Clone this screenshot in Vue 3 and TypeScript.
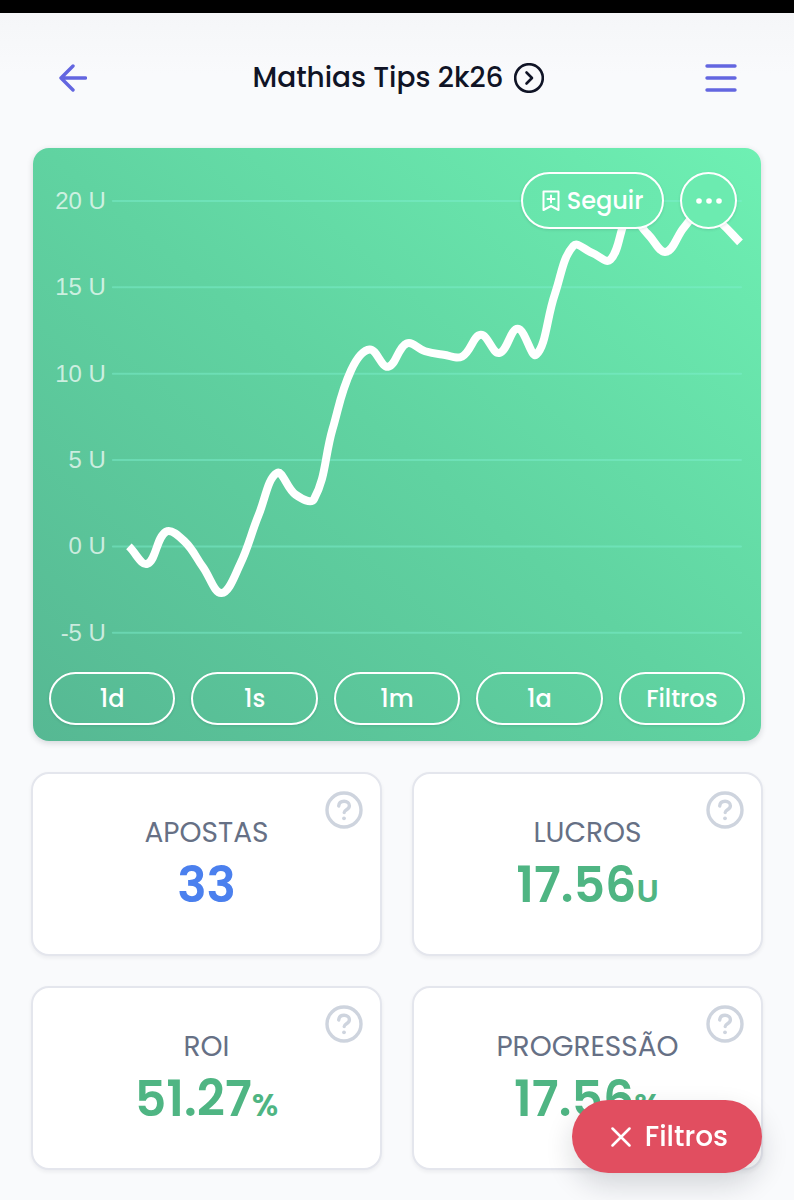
<script setup lang="ts">
interface Stat {
  label: string
  value: string
  unit: string
  tone: 'blue' | 'green'
}

interface Point {
  x: number
  y: number
}

const ranges: string[] = ['1d', '1s', '1m', '1a', 'Filtros']

const stats: Stat[] = [
  { label: 'APOSTAS', value: '33', unit: '', tone: 'blue' },
  { label: 'LUCROS', value: '17.56', unit: 'U', tone: 'green' },
  { label: 'ROI', value: '51.27', unit: '%', tone: 'green' },
  { label: 'PROGRESSÃO', value: '17.56', unit: '%', tone: 'green' },
]

const ticks: number[] = [20, 15, 10, 5, 0, -5]

// Accumulated profit in units after each bet
const profit: number[] = [
  0, -1, 0.85, 0.3, -1.2, -2.7, -1.05, 1.8, 4.25, 3, 2.75, 6.8, 10.2, 11.4,
  10.4, 11.75, 11.3, 11.1, 11, 12.25, 11.2, 12.6, 11.1, 14.6, 17.4, 17,
  16.6, 19.1, 18.1, 17.05, 18.5, 19.5, 18.7, 17.6,
]

const scaleY = (units: number): number => 399 - units * 17.3

const points: Point[] = profit.map((units, i) => ({
  x: 96 + (i * 612) / (profit.length - 1),
  y: scaleY(units),
}))

const TENSION = 0.4

// Cubic spline whose control points are weighted by the distance to each neighbour
function curve(pts: Point[]): string {
  const controls = pts.map((cur, i) => {
    const prev = pts[i - 1] ?? cur
    const next = pts[i + 1] ?? cur
    const before = Math.hypot(cur.x - prev.x, cur.y - prev.y)
    const after = Math.hypot(next.x - cur.x, next.y - cur.y)
    const a = (TENSION * before) / (before + after)
    const b = (TENSION * after) / (before + after)
    const dx = next.x - prev.x
    const dy = next.y - prev.y
    return {
      back: { x: cur.x - a * dx, y: cur.y - a * dy },
      ahead: { x: cur.x + b * dx, y: cur.y + b * dy },
    }
  })
  let d = `M${pts[0].x},${pts[0].y}`
  for (let i = 1; i < pts.length; i++) {
    const from = controls[i - 1].ahead
    const to = controls[i].back
    d += ` C${from.x},${from.y} ${to.x},${to.y} ${pts[i].x},${pts[i].y}`
  }
  return d
}

const line = curve(points)
</script>

<template>
  <div class="screen">
    <div class="status"></div>

    <header class="header">
      <button class="icon-btn" type="button" aria-label="Voltar">
        <svg width="28" height="28" viewBox="0 0 28 28" class="stroke">
          <path d="M14 2 2 14l12 12M2 14h24.500" />
        </svg>
      </button>
      <h1 class="title">
        <a href="#">
          Mathias Tips 2k26
          <svg width="30" height="30" viewBox="0 0 30 30" class="stroke thin">
            <circle cx="15" cy="15" r="13.800" />
            <path d="m12.500 9.500 5.500 5.500-5.500 5.500" />
          </svg>
        </a>
      </h1>
      <button class="icon-btn end" type="button" aria-label="Menu">
        <svg width="32" height="28" viewBox="0 0 32 28" class="stroke">
          <path d="M2 2h28M2 14h28M2 26h28" />
        </svg>
      </button>
    </header>

    <main>
      <section class="chart-card">
        <svg class="chart" viewBox="0 0 729 525" role="img" aria-label="Lucro acumulado">
          <g v-for="t in ticks" :key="t">
            <line class="grid-line" x1="80" x2="709" :y1="scaleY(t)" :y2="scaleY(t)" />
            <text class="tick" x="73" :y="scaleY(t) + 8">{{ t }} U</text>
          </g>
          <path class="profit" :d="line" />
        </svg>
        <div class="actions">
          <button class="pill follow" type="button">
            <svg width="18" height="22" viewBox="0 0 18 22">
              <path d="M1.500 1.500h15v18.500L9 16l-7.500 4z" />
              <path d="M9 5.500v7M5.500 9h7" />
            </svg>
            Seguir
          </button>
          <button class="pill more" type="button" aria-label="Mais opções">
            <svg width="26" height="6" viewBox="0 0 26 6">
              <circle cx="3" cy="3" r="2.800" />
              <circle cx="13" cy="3" r="2.800" />
              <circle cx="23" cy="3" r="2.800" />
            </svg>
          </button>
        </div>
        <div class="ranges">
          <button v-for="r in ranges" :key="r" class="pill" type="button">{{ r }}</button>
        </div>
      </section>

      <section class="stats">
        <article v-for="s in stats" :key="s.label" class="stat">
          <h2>{{ s.label }}</h2>
          <p :class="s.tone">{{ s.value }}<small v-if="s.unit">{{ s.unit }}</small></p>
          <button class="help" type="button" :aria-label="'Ajuda: ' + s.label">
            <svg width="38" height="38" viewBox="0 0 38 38">
              <circle class="ring" cx="19" cy="19" r="17" />
              <path class="ring" d="M13.700 15c.3-3.200 2.500-4.700 5.400-4.700 3 0 5.300 1.800 5.300 4.500 0 4-5.200 3.800-5.200 6.800" />
              <circle class="dot" cx="19" cy="27.300" r="1.900" />
            </svg>
          </button>
        </article>
      </section>
    </main>

    <button class="clear" type="button">
      <svg width="20" height="20" viewBox="0 0 20 20">
        <path d="M1.500 1.500l17 17M18.500 1.500l-17 17" />
      </svg>
      Filtros
    </button>
  </div>
</template>

<style>
body {
  margin: 0;
  background: #f9fafc;
}
</style>

<style scoped>
.screen {
  min-height: 100vh;
  box-sizing: border-box;
  padding-bottom: 29px;
  font-family: Poppins, Inter, sans-serif;
  color: #101426;
}

button {
  margin: 0;
  padding: 0;
  border: 0;
  background: none;
  color: inherit;
  font: inherit;
  cursor: pointer;
}

svg {
  display: block;
  fill: none;
  stroke-linecap: round;
  stroke-linejoin: round;
}

.status {
  height: 13px;
  background: #000;
}

.header {
  display: grid;
  grid-template-columns: 1fr auto 1fr;
  align-items: center;
  height: 130px;
  padding: 0 57px 5px 59px;
  background: linear-gradient(#f5f6f8, #f9fafc 60px);
}

.icon-btn {
  justify-self: start;
  color: #6366e0;
}

.icon-btn.end {
  justify-self: end;
}

.stroke {
  stroke: currentColor;
  stroke-width: 3.4;
}

.stroke.thin {
  stroke-width: 2.6;
}

.title {
  margin: 0;
  font-size: 28px;
  font-weight: 500;
  line-height: 42px;
}

.title a {
  display: flex;
  align-items: center;
  gap: 10px;
  color: inherit;
  text-decoration: none;
}

.chart-card {
  position: relative;
  margin: 0 33px 31px;
  padding-bottom: 16px;
  border-radius: 16px;
  background: linear-gradient(40deg, #56b893 0%, #60d3a1 50%, #6ef0b3 100%);
  box-shadow: 0 2px 6px rgba(16, 24, 40, 0.16);
}

.chart {
  width: 100%;
  height: auto;
}

.grid-line {
  stroke: #7fefd0;
  stroke-opacity: 0.45;
  stroke-width: 2;
}

.tick {
  fill: #fff;
  fill-opacity: 0.7;
  font-family: "Liberation Sans", Arial, sans-serif;
  font-size: 24px;
  text-anchor: end;
}

.profit {
  stroke: #fff;
  stroke-width: 8;
  stroke-linecap: butt;
}

.pill {
  display: flex;
  align-items: center;
  justify-content: center;
  box-sizing: border-box;
  height: 53px;
  border: 2px solid #fff;
  border-radius: 29px;
  color: #fff;
  font-size: 24px;
  font-weight: 500;
  box-shadow: 0 1px 3px rgba(16, 24, 40, 0.12);
}

.actions {
  position: absolute;
  top: 24px;
  right: 24px;
  display: flex;
  gap: 16px;
}

.actions .pill {
  height: 57px;
}

.actions .follow {
  width: 143px;
  gap: 7px;
  background: linear-gradient(90deg, #68e5ac, #6be9af);
}

.follow svg {
  stroke: #fff;
  stroke-width: 2;
}

.actions .more {
  width: 57px;
  background: #6cebb0;
}

.more svg {
  fill: #fff;
}

.ranges {
  display: grid;
  grid-template-columns: repeat(5, 1fr);
  gap: 16px;
  padding: 0 16px;
}

.stats {
  display: grid;
  grid-template-columns: 1fr 1fr;
  gap: 30px;
  padding: 0 31px;
}

.stat {
  position: relative;
  box-sizing: border-box;
  min-height: 184px;
  padding: 38px 16px;
  border: 2px solid #e4e6ed;
  border-radius: 18px;
  background: #fff;
  text-align: center;
  box-shadow: 0 2px 4px rgba(16, 24, 40, 0.06);
}

.stat h2 {
  margin: 0;
  color: #667085;
  font-size: 28px;
  font-weight: 400;
  line-height: 42px;
}

.stat p {
  margin: 0;
  font-size: 49px;
  font-weight: 600;
  line-height: 62px;
}

.stat small {
  font-size: 32px;
  line-height: 32px;
}

.blue {
  color: #4b80ee;
}

.green {
  color: #4fb583;
}

.help {
  position: absolute;
  top: 17px;
  right: 17px;
}

.ring {
  stroke: #ced4de;
  stroke-width: 3.4;
}

.dot {
  fill: #ced4de;
}

.clear {
  position: fixed;
  right: 32px;
  bottom: 27px;
  display: flex;
  align-items: center;
  gap: 14px;
  height: 73px;
  padding: 0 34px 0 39px;
  border-radius: 37px;
  background: #e14e60;
  color: #fff;
  font-size: 28px;
  font-weight: 500;
  box-shadow: 0 12px 28px rgba(16, 24, 40, 0.16);
}

.clear svg {
  stroke: #fff;
  stroke-width: 2.5;
}
</style>
